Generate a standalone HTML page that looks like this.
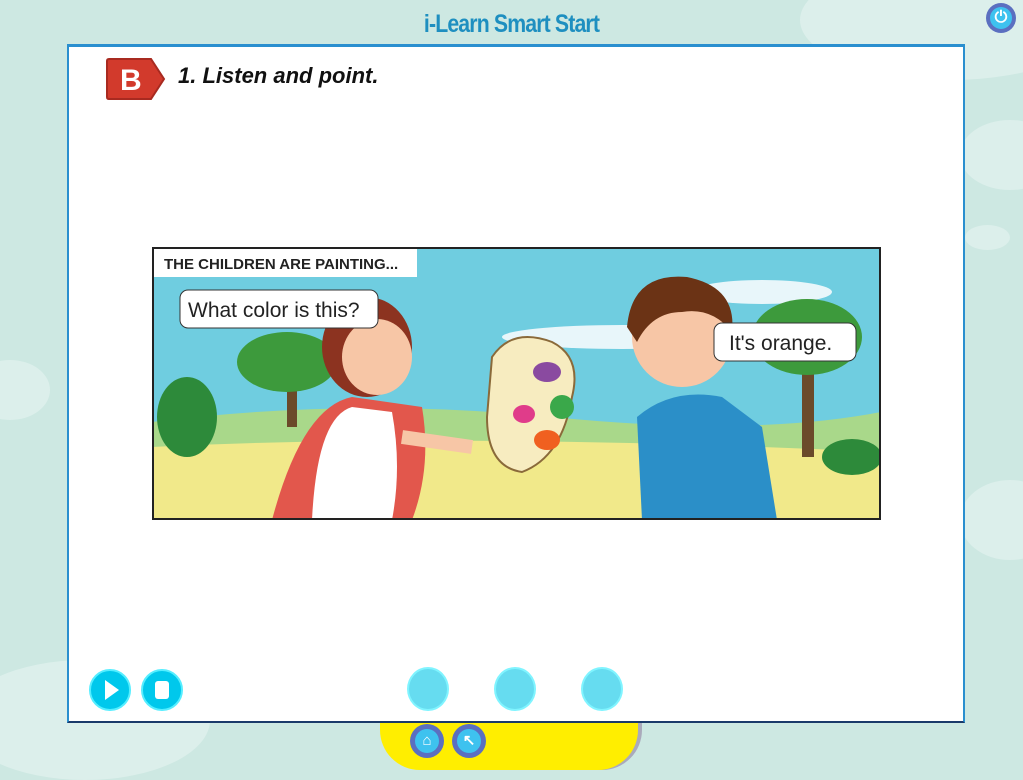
<!DOCTYPE html>
<html><head><meta charset="utf-8"><style>
body{margin:0;width:1023px;height:768px;overflow:hidden;background:#cde8e2;font-family:"Liberation Sans",sans-serif;position:relative}
.cloud{position:absolute;background:#dcefeb;border-radius:50%}
.panel{position:absolute;left:67px;top:44px;width:894px;height:674px;background:#fff;border-top:3px solid #2a8fcf;border-left:2px solid #2a8fcf;border-right:2px solid #2a8fcf;border-bottom:2px solid #1a3a6a}
.title{position:absolute;left:0;width:1023px;top:10px;text-align:center;color:#1e8fc0;font-weight:bold;font-size:25px;letter-spacing:-1px;transform:scaleX(.85)}
.btn{position:absolute;border-radius:50%}
</style></head><body>
<div class="cloud" style="left:800px;top:-40px;width:300px;height:120px"></div>
<div class="cloud" style="left:960px;top:120px;width:100px;height:70px"></div>
<div class="cloud" style="left:965px;top:225px;width:45px;height:25px"></div>
<div class="cloud" style="left:-30px;top:360px;width:80px;height:60px"></div>
<div class="cloud" style="left:-40px;top:660px;width:250px;height:120px"></div>
<div class="cloud" style="left:960px;top:480px;width:100px;height:80px"></div>
<div class="title">i-Learn Smart Start</div>
<div class="btn" style="left:986px;top:3px;width:30px;height:30px;background:#5b6fc0"><div style="position:absolute;left:4px;top:4px;width:22px;height:22px;border-radius:50%;background:#3ec2ef;color:#fff;font-size:16px;text-align:center;line-height:22px;font-weight:bold">⏻</div></div>
<div style="position:absolute;left:380px;top:715px;width:258px;height:55px;background:#ffee00;border-radius:0 0 40px 40px;box-shadow:4px 0 0 #aab"></div>
<div class="btn" style="left:410px;top:724px;width:34px;height:34px;background:#5b6fc0"><div style="position:absolute;left:5px;top:5px;width:24px;height:24px;border-radius:50%;background:#3ec2ef;color:#fff;text-align:center;line-height:24px;font-size:15px">⌂</div></div>
<div class="btn" style="left:452px;top:724px;width:34px;height:34px;background:#5b6fc0"><div style="position:absolute;left:5px;top:5px;width:24px;height:24px;border-radius:50%;background:#3ec2ef;color:#fff;text-align:center;line-height:24px;font-size:15px;font-weight:bold">↖</div></div>
<div class="panel">
 <svg style="position:absolute;left:36px;top:9px" width="62" height="46"><path d="M4 3H46L59 23L46 43H4Q2 43 2 41V5Q2 3 4 3Z" fill="#d23a2c" stroke="#a82a20" stroke-width="2"/><text x="15" y="34" font-family="Liberation Sans" font-weight="bold" font-size="30" fill="#fff">B</text></svg>
 <div style="position:absolute;left:109px;top:16px;font-size:22px;font-weight:bold;font-style:italic;color:#111">1. Listen and point.</div>
 <div class="btn" style="left:20px;top:622px;width:38px;height:38px;background:#00c8ec;border:2px solid #5ef"><svg width="38" height="38"><path d="M14 9L28 19L14 29Z" fill="#fff"/></svg></div>
 <div class="btn" style="left:72px;top:622px;width:38px;height:38px;background:#00c8ec;border:2px solid #5ef"><div style="position:absolute;left:12px;top:10px;width:14px;height:18px;background:#fff;border-radius:3px"></div></div>
 <div class="btn" style="left:338px;top:620px;width:38px;height:40px;background:#66dcf0;border:2px solid #80f4ff"></div>
 <div class="btn" style="left:425px;top:620px;width:38px;height:40px;background:#66dcf0;border:2px solid #80f4ff"></div>
 <div class="btn" style="left:512px;top:620px;width:38px;height:40px;background:#66dcf0;border:2px solid #80f4ff"></div>
</div>
<svg style="position:absolute;left:152px;top:247px" width="729" height="273">
 <rect x="0" y="0" width="729" height="273" fill="#6fcde0"/>
 <ellipse cx="470" cy="90" rx="120" ry="12" fill="#e8f6fa"/>
 <ellipse cx="610" cy="45" rx="70" ry="12" fill="#e8f6fa"/>
 <path d="M0 175Q200 150 400 170T729 165V273H0Z" fill="#a9d88a"/>
 <path d="M0 200Q300 185 729 205V273H0Z" fill="#f1e98a"/>
 <rect x="135" y="130" width="10" height="50" fill="#6b4a2a"/><ellipse cx="135" cy="115" rx="50" ry="30" fill="#3d9a3c"/>
 <rect x="650" y="110" width="12" height="100" fill="#6b4a2a"/><ellipse cx="655" cy="90" rx="55" ry="38" fill="#3d9a3c"/>
 <ellipse cx="35" cy="170" rx="30" ry="40" fill="#2d8a3a"/><ellipse cx="700" cy="210" rx="30" ry="18" fill="#2d8a3a"/>
 <path d="M120 273Q150 160 200 150L270 160Q280 220 260 273Z" fill="#e2574c"/>
 <path d="M160 273Q165 170 200 160L240 165Q250 220 240 273Z" fill="#fff"/>
 <ellipse cx="215" cy="100" rx="45" ry="50" fill="#8c3320"/>
 <ellipse cx="225" cy="110" rx="35" ry="38" fill="#f7c6a6"/>
 <path d="M250 190L320 200" stroke="#f7c6a6" stroke-width="14"/>
 <path d="M340 110Q360 80 400 95Q430 110 420 150Q410 210 370 225Q335 220 335 170Z" fill="#f7ecc0" stroke="#8a6a3a" stroke-width="2"/>
 <ellipse cx="395" cy="125" rx="14" ry="10" fill="#8a4aa0"/><ellipse cx="410" cy="160" rx="12" ry="12" fill="#3aa84a"/><ellipse cx="372" cy="167" rx="11" ry="9" fill="#e03c8a"/><ellipse cx="395" cy="193" rx="13" ry="10" fill="#f06020"/>
 <path d="M490 273L485 170Q520 140 570 150L610 180L625 273Z" fill="#2b8fc8"/>
 <ellipse cx="530" cy="90" rx="50" ry="50" fill="#f7c6a6"/>
 <path d="M475 80Q480 25 535 30Q585 40 580 85Q560 60 530 65Q500 65 485 95Z" fill="#6b3315"/>
 <rect x="0" y="0" width="729" height="273" fill="none" stroke="#222" stroke-width="4"/>
 <rect x="2" y="2" width="263" height="28" fill="#fff"/>
 <text x="12" y="22" font-family="Liberation Sans" font-size="15" font-weight="bold" fill="#222">THE CHILDREN ARE PAINTING...</text>
 <rect x="28" y="43" width="198" height="38" rx="8" fill="#fff" stroke="#333"/>
 <text x="36" y="70" font-family="Liberation Sans" font-size="21" fill="#222">What color is this?</text>
 <rect x="562" y="76" width="142" height="38" rx="8" fill="#fff" stroke="#333"/>
 <text x="577" y="103" font-family="Liberation Sans" font-size="21" fill="#222">It's orange.</text>
</svg>
</body></html>
